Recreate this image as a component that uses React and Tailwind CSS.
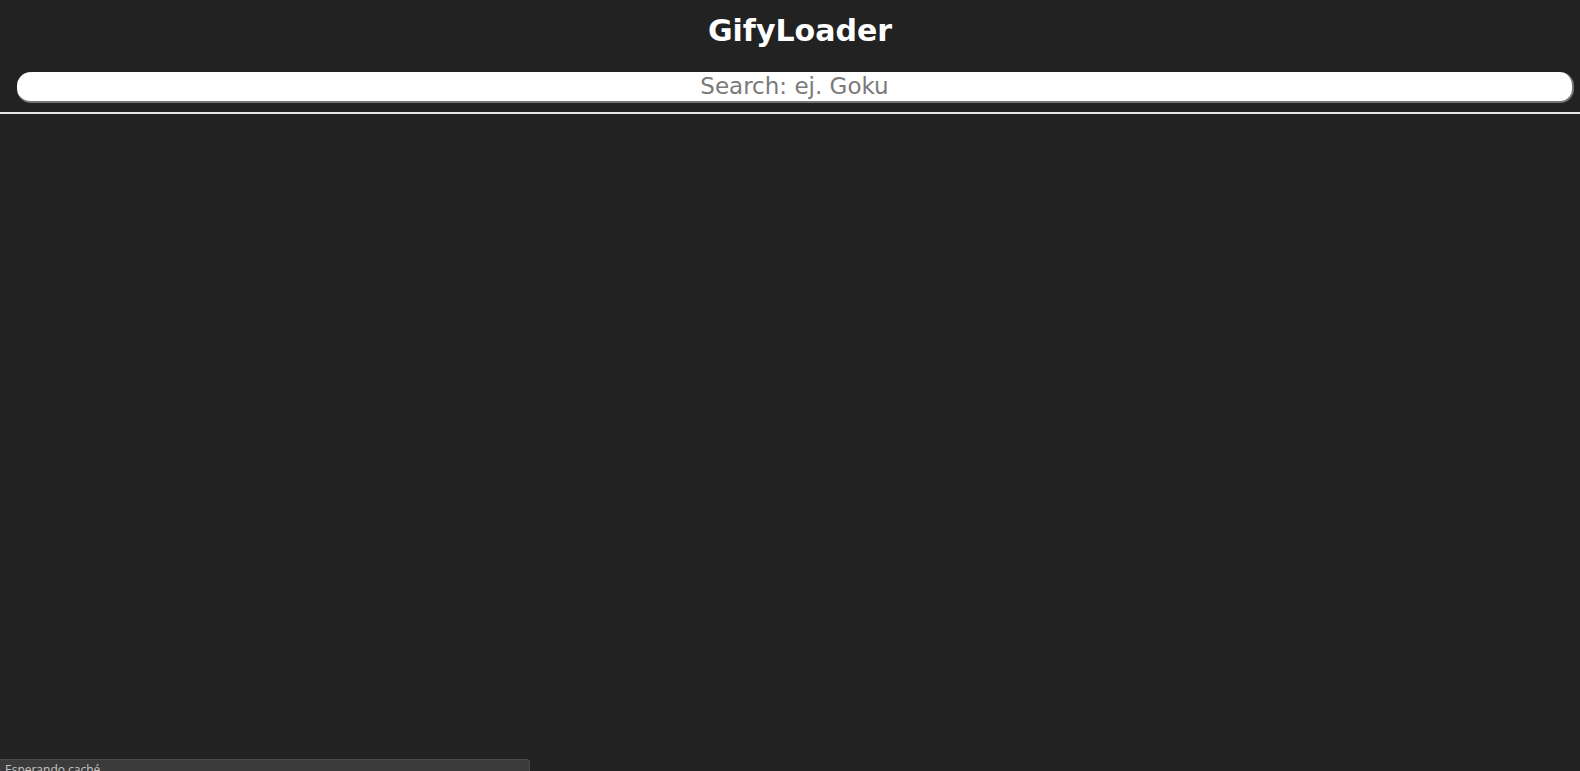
export default function App() {
  return (
    <div className="min-h-screen bg-[#222222] relative overflow-hidden" style={{ fontFamily: '"DejaVu Sans", "Open Sans", sans-serif' }}>
      <header className="pt-[11px]">
        <h1 className="text-center text-white font-bold text-[30px] leading-[40px] pl-[20px]">GifyLoader</h1>
        <div className="pl-[17px] pr-[6px] pt-[21px] pb-[9px]">
          <input
            type="text"
            placeholder="Search: ej. Goku"
            className="w-full h-[31px] bg-white rounded-[14px] border-b-[2px] border-r-[2px] border-[#767676] text-center text-[23px] text-[#333] placeholder:text-[#7a7a7a] outline-none"
          />
        </div>
        <hr className="border-0 h-[2px] bg-[#e8e8e8]" />
      </header>
      <main></main>
      <div className="absolute left-0 top-[759px] w-[530px] h-[20px] bg-[#3b3b3b] border-t border-r border-[#4a4a4a] rounded-tr-[4px] text-[12px] leading-[18px] text-[#c8c8c8] pl-[5px] pt-[1px]" style={{ fontFamily: '"Open Sans", sans-serif' }}>
        Esperando caché
      </div>
    </div>
  );
}
